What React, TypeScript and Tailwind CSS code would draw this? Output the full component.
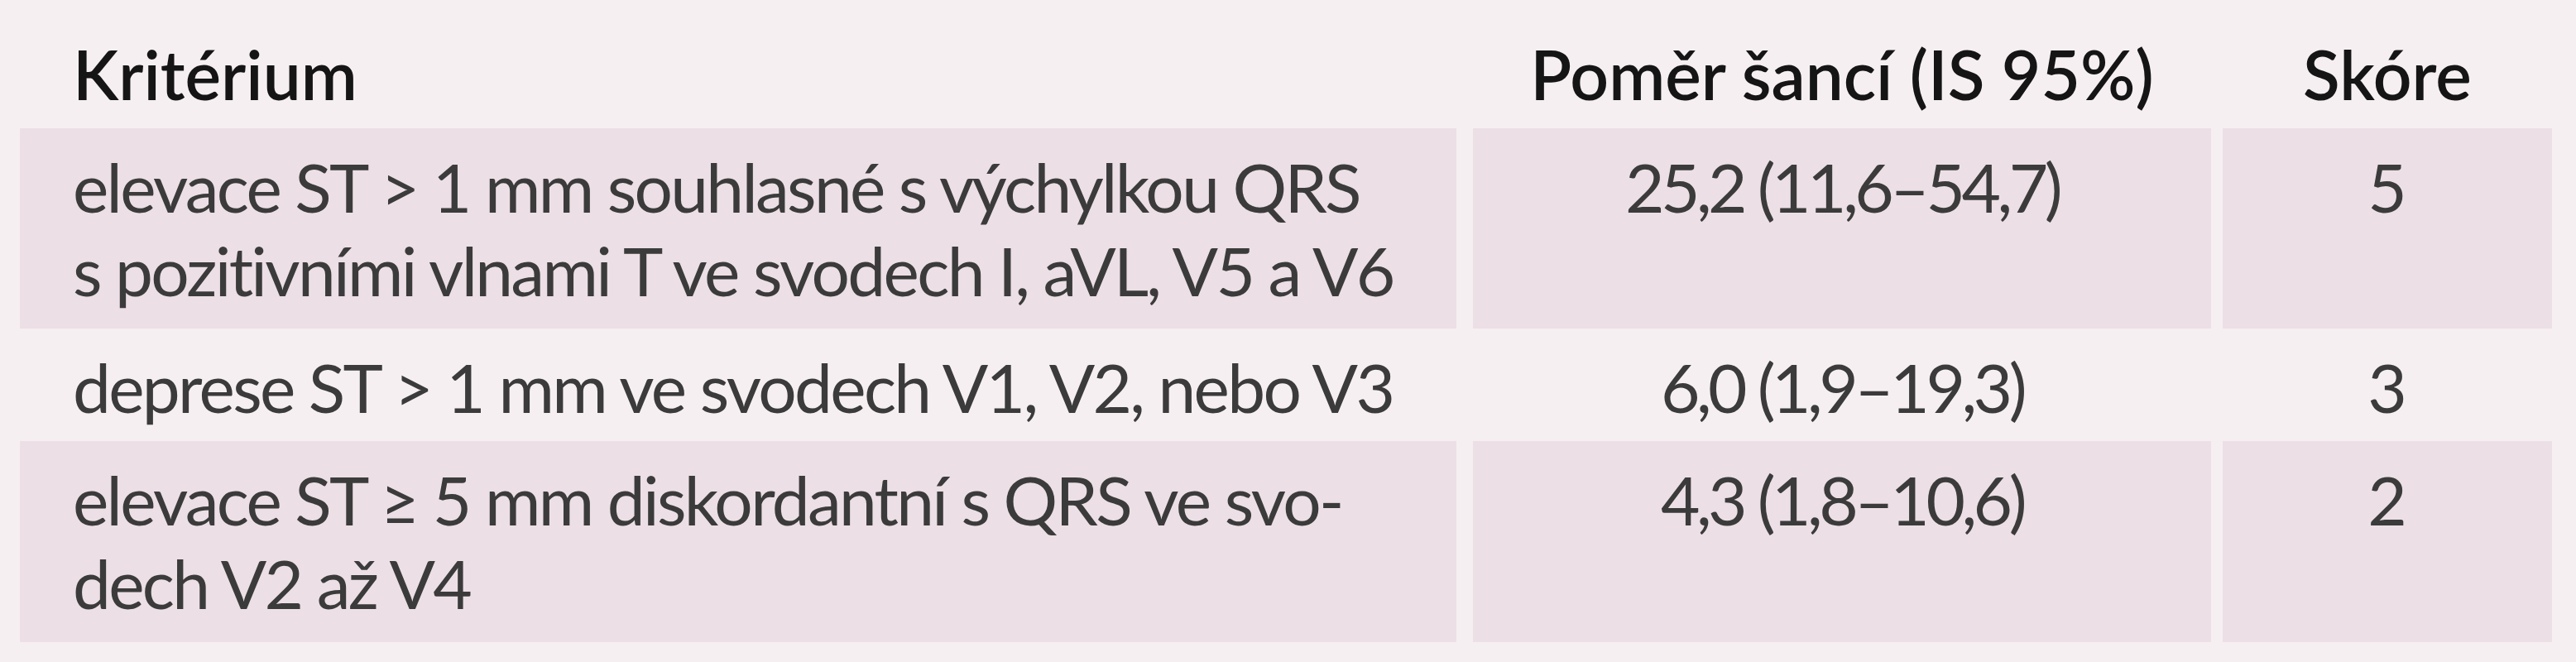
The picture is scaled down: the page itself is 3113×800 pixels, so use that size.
type Row = {
  criterion: string[];
  odds: string;
  score: string;
  shaded: boolean;
  height: string;
};

const rows: Row[] = [
  {
    criterion: [
      'elevace ST > 1 mm souhlasné s výchylkou QRS',
      's pozitivními vlnami T ve svodech I, aVL, V5 a V6',
    ],
    odds: '25,2 (11,6–54,7)',
    score: '5',
    shaded: true,
    height: 'h-[242px]',
  },
  {
    criterion: ['deprese ST > 1 mm ve svodech V1, V2, nebo V3'],
    odds: '6,0 (1,9–19,3)',
    score: '3',
    shaded: false,
    height: 'h-[136px]',
  },
  {
    criterion: ['elevace ST ≥ 5 mm diskordantní s QRS ve svo-', 'dech V2 až V4'],
    odds: '4,3 (1,8–10,6)',
    score: '2',
    shaded: true,
    height: 'h-[243px]',
  },
];

export default function App() {
  return (
    <div
      className="w-[3113px] h-[800px] bg-[#f6eff2] pt-[19px] pl-[24px] text-[82px] leading-[101px] text-[#3b3b3b]"
      style={{ fontFamily: 'Lato, "Open Sans", sans-serif' }}
    >
      <div className="flex h-[136px] font-semibold text-[#151515]">
        <div className="w-[1736px] pt-[20px] pl-[64px] whitespace-nowrap">Kritérium</div>
        <div className="ml-[20px] w-[892px] pt-[20px] text-center whitespace-nowrap">
          Poměr šancí (IS 95%)
        </div>
        <div className="ml-[14px] w-[398px] pt-[20px] text-center">Skóre</div>
      </div>

      {rows.map((r) => {
        const bg = r.shaded ? 'bg-[#ecdfe5]' : '';
        return (
          <div key={r.odds} className={`flex ${r.height}`}>
            <div className={`w-[1736px] pt-[20px] pl-[64px] whitespace-nowrap tracking-[-2.7px] ${bg}`}>
              {r.criterion.map((line) => (
                <div key={line}>{line}</div>
              ))}
            </div>
            <div
              className={`ml-[20px] w-[892px] pt-[20px] text-center whitespace-nowrap tracking-[-4.5px] ${bg}`}
            >
              {r.odds}
            </div>
            <div className={`ml-[14px] w-[398px] pt-[20px] text-center ${bg}`}>{r.score}</div>
          </div>
        );
      })}
    </div>
  );
}
